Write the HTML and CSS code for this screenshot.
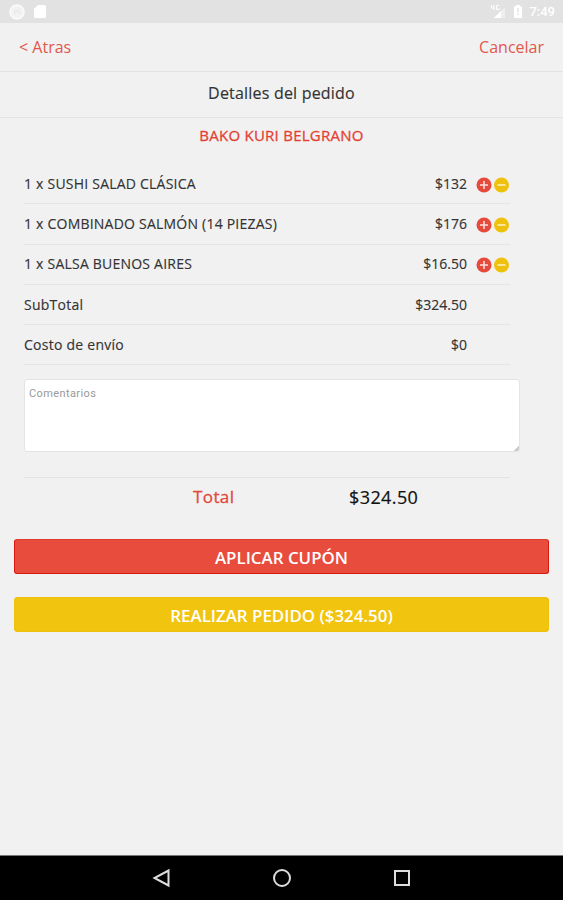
FILE: index.html
```html
<!DOCTYPE html>
<html lang="es">
<head>
    <meta charset="UTF-8">
    <meta name="viewport" content="width=device-width, initial-scale=1.0">
    <title>Detalles del pedido</title>
    <link rel="stylesheet" href="styles.css">
</head>
<body>
    <div class="status-bar">
        <svg width="50" height="23" viewBox="0 0 50 23">
            <circle cx="17" cy="12" r="7" fill="#f3f3f3" stroke="#fafafa" stroke-width="1.5"/>
            <path d="M14 14a3 3 0 0 1 6 0M14.5 9.5h1M18.5 9.5h1" fill="none" stroke="#e2e2e2"/>
            <path d="M38 5h6.500a1.500 1.500 0 0 1 1.500 1.500v10a1.500 1.500 0 0 1-1.500 1.500h-9a1.500 1.500 0 0 1-1.500-1.500V9z" fill="#fff"/>
        </svg>
        <div class="status-right">
            <svg width="36" height="23" viewBox="0 0 36 23">
                <path d="M16 7v11H5z" fill="#eee"/>
                <path d="M12 11v7H5z" fill="#fff"/>
                <path d="M2.500 5v3h3M5 5v5M10 5.500H7.500v4H10V8" fill="none" stroke="#fff"/>
                <path d="M27 5h4v1.500h2V18h-8V6.500h2z" fill="#fff"/>
                <path d="M29 8v4M29 13.500v1.500" stroke="#e2e2e2" stroke-width="1.500"/>
            </svg>
            <span class="clock">7:49</span>
        </div>
    </div>

    <div class="nav">
        <a class="nav-link">&lt; Atras</a>
        <a class="nav-link">Cancelar</a>
    </div>
    <h1>Detalles del pedido</h1>
    <h2>BAKO KURI BELGRANO</h2>

    <div class="pedido">
        <div class="fila">
            <span class="nombre">1 x SUSHI SALAD CLÁSICA</span>
            <span class="precio">$132</span>
            <svg class="botones" width="34" height="16" viewBox="0 0 34 16">
                <circle cx="8" cy="8" r="7.500" fill="#e64a3c"/>
                <path d="M4 8h8M8 4v8" stroke="#fbe3e0" stroke-width="1.500"/>
                <circle cx="25.500" cy="8" r="7.500" fill="#efc10c"/>
                <path d="M21.500 8h8" stroke="#fcf3cf" stroke-width="1.500"/>
            </svg>
        </div>
        <div class="fila">
            <span class="nombre">1 x COMBINADO SALMÓN (14 PIEZAS)</span>
            <span class="precio">$176</span>
            <svg class="botones" width="34" height="16" viewBox="0 0 34 16">
                <circle cx="8" cy="8" r="7.500" fill="#e64a3c"/>
                <path d="M4 8h8M8 4v8" stroke="#fbe3e0" stroke-width="1.500"/>
                <circle cx="25.500" cy="8" r="7.500" fill="#efc10c"/>
                <path d="M21.500 8h8" stroke="#fcf3cf" stroke-width="1.500"/>
            </svg>
        </div>
        <div class="fila">
            <span class="nombre">1 x SALSA BUENOS AIRES</span>
            <span class="precio">$16.50</span>
            <svg class="botones" width="34" height="16" viewBox="0 0 34 16">
                <circle cx="8" cy="8" r="7.500" fill="#e64a3c"/>
                <path d="M4 8h8M8 4v8" stroke="#fbe3e0" stroke-width="1.500"/>
                <circle cx="25.500" cy="8" r="7.500" fill="#efc10c"/>
                <path d="M21.500 8h8" stroke="#fcf3cf" stroke-width="1.500"/>
            </svg>
        </div>
        <div class="fila resumen">
            <span class="nombre">SubTotal</span>
            <span class="precio">$324.50</span>
        </div>
        <div class="fila resumen">
            <span class="nombre">Costo de envío</span>
            <span class="precio">$0</span>
        </div>
    </div>

    <textarea class="comentarios" placeholder="Comentarios"></textarea>

    <div class="total">
        <span class="total-label">Total</span>
        <span class="total-monto">$324.50</span>
    </div>

    <button class="btn btn-cupon">APLICAR CUPÓN</button>
    <button class="btn btn-pedido">REALIZAR PEDIDO ($324.50)</button>

    <div class="android-nav">
        <svg width="20" height="20" viewBox="0 0 20 20"><path d="M16.500 2.500v15L2.500 10z"/></svg>
        <svg width="20" height="20" viewBox="0 0 20 20"><circle cx="10" cy="10" r="8"/></svg>
        <svg width="20" height="20" viewBox="0 0 20 20"><path d="M3 3h14v14H3z"/></svg>
    </div>
</body>
</html>
```
FILE: styles.css
```css
* {
    box-sizing: border-box;
}
body {
    font-family: "Open Sans", "Noto Sans", sans-serif;
    background-color: #f1f1f1;
    color: #333;
    height: 900px;
    margin: 0;
    display: flex;
    flex-direction: column;
    overflow: hidden;
}
.status-bar {
    height: 23px;
    background: #e2e2e2;
    display: flex;
    justify-content: space-between;
    flex-shrink: 0;
}
.status-right {
    display: flex;
    padding-right: 8px;
    gap: 4px;
}
.clock {
    font-family: Roboto, sans-serif;
    font-size: 13px;
    font-weight: 500;
    line-height: 24px;
    color: #fff;
}
.nav {
    height: 49px;
    padding: 0 19px;
    display: flex;
    justify-content: space-between;
    border-bottom: 1px solid #e3e3e3;
    flex-shrink: 0;
}
.nav-link {
    font-size: 16px;
    line-height: 48px;
    color: #e2574c;
}
h1 {
    height: 46px;
    margin: 0;
    font-size: 16px;
    font-weight: 400;
    line-height: 43px;
    letter-spacing: 0.2px;
    text-align: center;
    border-bottom: 1px solid #e3e3e3;
    -webkit-text-stroke: 0.15px;
    flex-shrink: 0;
}
h2 {
    height: 46px;
    margin: 0;
    font-size: 15px;
    font-weight: 400;
    line-height: 35px;
    letter-spacing: 0.25px;
    color: #e53f33;
    -webkit-text-stroke: 0.3px;
    text-align: center;
    flex-shrink: 0;
}
.pedido {
    width: 486px;
    margin-left: 24px;
}
.fila {
    height: 40.3px;
    padding-bottom: 1px;
    display: flex;
    align-items: center;
    border-bottom: 1px solid #e5e5e5;
    font-size: 14px;
    -webkit-text-stroke: 0.15px;
}
.nombre {
    flex: 1;
    letter-spacing: 0.22px;
}
.precio {
    width: 80px;
    margin-right: 9px;
    text-align: right;
}
.botones {
    position: relative;
    top: 1.5px;
}
.resumen .nombre {
    letter-spacing: 0.25px;
}
.resumen .precio {
    margin-right: 43px;
}
.comentarios {
    width: 496px;
    height: 73px;
    margin: 14px 0 0 24px;
    padding: 7px 4px;
    border: 1px solid #e4e4e4;
    border-radius: 3px;
    background: linear-gradient(135deg, #fff 50%, #ccc 50%) right bottom / 5px 5px no-repeat #fff;
    font-family: Roboto, sans-serif;
    font-size: 11px;
    letter-spacing: 0.4px;
    resize: none;
    flex-shrink: 0;
}
.comentarios::placeholder {
    color: #999;
}
.total {
    width: 486px;
    height: 62px;
    margin: 25px 0 0 24px;
    border-top: 1px solid #e3e3e3;
    display: flex;
    line-height: 38px;
    flex-shrink: 0;
}
.total-label {
    width: 156px;
    margin-left: 169px;
    font-size: 17px;
    letter-spacing: 0.4px;
    color: #e2483c;
    -webkit-text-stroke: 0.3px;
}
.total-monto {
    font-size: 18px;
    letter-spacing: 0.4px;
    color: #111;
    -webkit-text-stroke: 0.2px;
}
.btn {
    height: 35px;
    margin: 0 14px 23px;
    padding: 2px 0 0;
    border-radius: 3px;
    border: 1px solid;
    font-family: inherit;
    font-size: 16.9px;
    font-weight: 600;
    line-height: 30px;
    color: #fff;
    flex-shrink: 0;
}
.btn-cupon {
    background: #e74c3c;
    border-color: #d9190f;
    border-top-color: #e33a2d;
}
.btn-pedido {
    background: #f1c40f;
    border-color: #efc10a;
}
.android-nav {
    height: 45px;
    margin-top: auto;
    background: #000;
    border-top: 1px solid #777;
    display: flex;
    justify-content: center;
    align-items: center;
    gap: 100px;
}
.android-nav svg {
    fill: none;
    stroke: #ddd;
    stroke-width: 2;
}
```
